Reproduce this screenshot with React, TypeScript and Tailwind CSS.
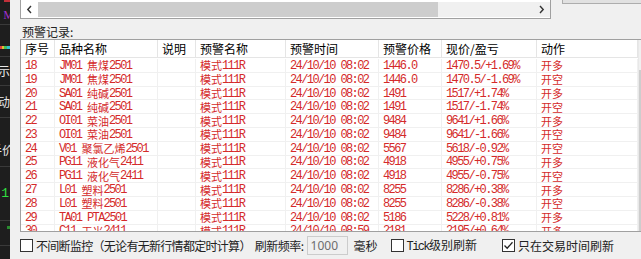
import React from "react";

type Row = [string, string, string, string, string, string, string];

// seq, name, alert time, alert price, price/pnl, action
const ROWS: Row[] = [
  ["18", "JM01 焦煤2501", "模式111R", "24/10/10 08:02", "1446.0", "1470.5/+1.69%", "开多"],
  ["19", "JM01 焦煤2501", "模式111R", "24/10/10 08:02", "1446.0", "1470.5/-1.69%", "开空"],
  ["20", "SA01 纯碱2501", "模式111R", "24/10/10 08:02", "1491", "1517/+1.74%", "开多"],
  ["21", "SA01 纯碱2501", "模式111R", "24/10/10 08:02", "1491", "1517/-1.74%", "开空"],
  ["22", "OI01 菜油2501", "模式111R", "24/10/10 08:02", "9484", "9641/+1.66%", "开多"],
  ["23", "OI01 菜油2501", "模式111R", "24/10/10 08:02", "9484", "9641/-1.66%", "开空"],
  ["24", "V01 聚氯乙烯2501", "模式111R", "24/10/10 08:02", "5567", "5618/-0.92%", "开空"],
  ["25", "PG11 液化气2411", "模式111R", "24/10/10 08:02", "4918", "4955/+0.75%", "开多"],
  ["26", "PG11 液化气2411", "模式111R", "24/10/10 08:02", "4918", "4955/-0.75%", "开空"],
  ["27", "L01 塑料2501", "模式111R", "24/10/10 08:02", "8255", "8286/+0.38%", "开多"],
  ["28", "L01 塑料2501", "模式111R", "24/10/10 08:02", "8255", "8286/-0.38%", "开空"],
  ["29", "TA01 PTA2501", "模式111R", "24/10/10 08:02", "5186", "5228/+0.81%", "开多"],
  ["30", "C11 玉米2411", "模式111R", "24/10/10 08:59", "2181", "2195/+0.64%", "开多"],
];

const HEADERS = ["序号", "品种名称", "说明", "预警名称", "预警时间", "预警价格", "现价/盈亏", "动作"];
const WIDTHS = ["w-[34px]", "w-[103px]", "w-[38px]", "w-[90px]", "w-[93px]", "w-[63px]", "w-[95px]", "w-[101px]"];

// ascii runs in a narrow mono face, CJK runs in Noto
function Mix({ s }: { s: string }) {
  const parts = s.split(/([\x00-\x7f]+)/).filter(Boolean);
  return (
    <>
      {parts.map((p, i) =>
        /^[\x00-\x7f]+$/.test(p) ? (
          <span key={i} className="font-['Liberation_Mono',monospace] text-[12px] tracking-[-1.6px] whitespace-pre">
            {p}
          </span>
        ) : (
          <span key={i}>{p}</span>
        )
      )}
    </>
  );
}

function CheckBox({ checked }: { checked?: boolean }) {
  return (
    <div className="w-[13px] h-[13px] border border-[#333] bg-white flex items-center justify-center shrink-0">
      {checked && (
        <svg width="11" height="11" viewBox="0 0 11 11">
          <path d="M1.5 5.5 L4.2 8.3 L9.5 2.2" fill="none" stroke="#222" strokeWidth="1.3" />
        </svg>
      )}
    </div>
  );
}

function SideStrip() {
  return (
    <div className="w-[10px] h-full bg-[#1e1e1e] flex flex-col shrink-0 overflow-hidden font-['Noto_Sans_CJK_SC',sans-serif] text-[12px] leading-none">
      <div className="h-[3px] flex justify-end">
        <div className="w-[6px] h-[2px] bg-[#c0303a]" />
      </div>
      <div className="h-[22px] flex justify-end items-center pt-[2px] border-b border-[#3a3a3a]">
        <span className="text-[#9b30c8] font-['Liberation_Serif',serif] text-[12px] translate-x-[4px]">M</span>
      </div>
      <div className="h-[32px] flex items-center border-b border-[#3a3a3a]">
        <div className="flex h-[3px] mt-[14px]">
          <div className="w-[2px] bg-[#e04040]" />
          <div className="w-[2px] bg-[#e0c030]" />
          <div className="w-[3px] bg-[#40c060]" />
          <div className="w-[3px] bg-[#30c0d0]" />
        </div>
      </div>
      <div className="h-[29px] flex justify-end items-center border-b border-[#3a3a3a]">
        <span className="text-[#e8e8e8] whitespace-nowrap">提示</span>
      </div>
      <div className="h-[32px] flex justify-end items-center border-b border-[#3a3a3a]">
        <span className="text-[#e8e8e8] whitespace-nowrap">联动</span>
      </div>
      <div className="h-[49px] flex justify-end items-end pb-[10px] border-b border-[#3a3a3a]">
        <span className="text-[#e8e8e8] whitespace-nowrap translate-x-[4px]">手价</span>
      </div>
      <div className="h-[54px] flex justify-end items-center border-b border-[#3a3a3a]">
        <span className="text-[#30e040] font-['Liberation_Mono',monospace] text-[13px] translate-x-[-1px]">1</span>
      </div>
      <div className="h-[25px] flex justify-end items-start pt-[5px] border-b border-[#3a3a3a]">
        <div className="w-[3px] h-[3px] bg-[#2a8a30]" />
      </div>
    </div>
  );
}

export default function App() {
  return (
    <div className="w-[641px] h-[259px] flex bg-[#f0f0f0] overflow-hidden font-['Noto_Sans_CJK_SC',sans-serif]">
      <SideStrip />
      <div className="flex-1 flex flex-col pl-[10px] min-w-0">
        {/* top: scrolled box + button stub */}
        <div className="flex items-start h-[19px]">
          <div className="w-[531px] h-[19px] bg-white border-l border-b border-r border-[#a0a0a0] flex flex-col">
            <div className="h-[2px]" />
            <div className="flex h-[15px]">
              <div className="w-[17px] flex items-center justify-center">
                <svg width="7" height="9" viewBox="0 0 7 9">
                  <path d="M5 1 L1.8 4.5 L5 8" fill="none" stroke="#333" strokeWidth="1.4" />
                </svg>
              </div>
              <div className="w-[400px] bg-[#cdcdcd]" />
              <div className="flex-1 bg-[#f0f0f0] flex items-center justify-end pr-[5px]">
                <svg width="7" height="9" viewBox="0 0 7 9">
                  <path d="M2 1 L5.2 4.5 L2 8" fill="none" stroke="#333" strokeWidth="1.4" />
                </svg>
              </div>
            </div>
          </div>
          <div className="ml-[11px] flex-1 h-[4px] bg-[#e1e1e1] border-l border-b border-[#adadad]" />
        </div>

        <div className="h-[19px] flex items-end pl-[2px] text-[12px] leading-none text-[#222]">预警记录:</div>

        {/* alert table */}
        <div className="mt-[1px] h-[193px] bg-white border-t border-l border-b border-[#a0a0a0] flex overflow-hidden">
          <div className="w-[617px] flex flex-col shrink-0">
            <div className="flex h-[18px] border-b border-[#e5e5e5] text-[12px] text-black leading-none shrink-0">
              {HEADERS.map((h, i) => (
                <div key={h} className={`${WIDTHS[i]} border-r border-[#e5e5e5] flex items-center pl-[4px] whitespace-nowrap`}>
                  {h}
                </div>
              ))}
            </div>
            <div className="h-[1px] shrink-0" />
            {ROWS.map((r) => {
              const cells = [r[0], r[1], "", r[2], r[3], r[4], r[5], r[6]];
              return (
                <div key={r[0]} className="flex h-[13.8px] shrink-0 border-b border-[#f0f0f0] box-border text-[11px] leading-none text-[#d42a2a]">
                  {cells.map((c, i) => (
                    <div key={i} className={`${WIDTHS[i]} border-r border-[#f0f0f0] flex items-center pl-[4px] pt-[1px] whitespace-nowrap overflow-hidden`}>
                      <Mix s={c} />
                    </div>
                  ))}
                </div>
              );
            })}
          </div>
          <div className="flex-1 flex flex-col bg-[#f0f0f0] border-l border-[#e8e8e8]">
            <div className="h-[30px]" />
            <div className="flex-1 bg-[#cdcdcd]" />
          </div>
        </div>

        {/* bottom options */}
        <div className="flex-1 flex items-center text-[12px] leading-none text-[#222] whitespace-nowrap">
          <CheckBox />
          <span className="ml-[3px] tracking-[-0.7px]">不间断监控（无论有无新行情都定时计算）</span>
          <span className="ml-[4px] tracking-[-0.5px]">刷新频率:</span>
          <div className="ml-[3px] w-[41px] h-[19px] border border-[#cccccc] bg-[#f0f0f0] flex items-center pl-[3px] text-[#6d6d6d] font-['Noto_Sans',sans-serif] text-[12px]">
            1000
          </div>
          <span className="ml-[6px]">毫秒</span>
          <div className="ml-[13px]">
            <CheckBox />
          </div>
          <span className="ml-[3px]">
            <Mix s="Tick" />
            级别刷新
          </span>
          <div className="ml-[25px]">
            <CheckBox checked />
          </div>
          <span className="ml-[3px]">只在交易时间刷新</span>
        </div>
      </div>
    </div>
  );
}
